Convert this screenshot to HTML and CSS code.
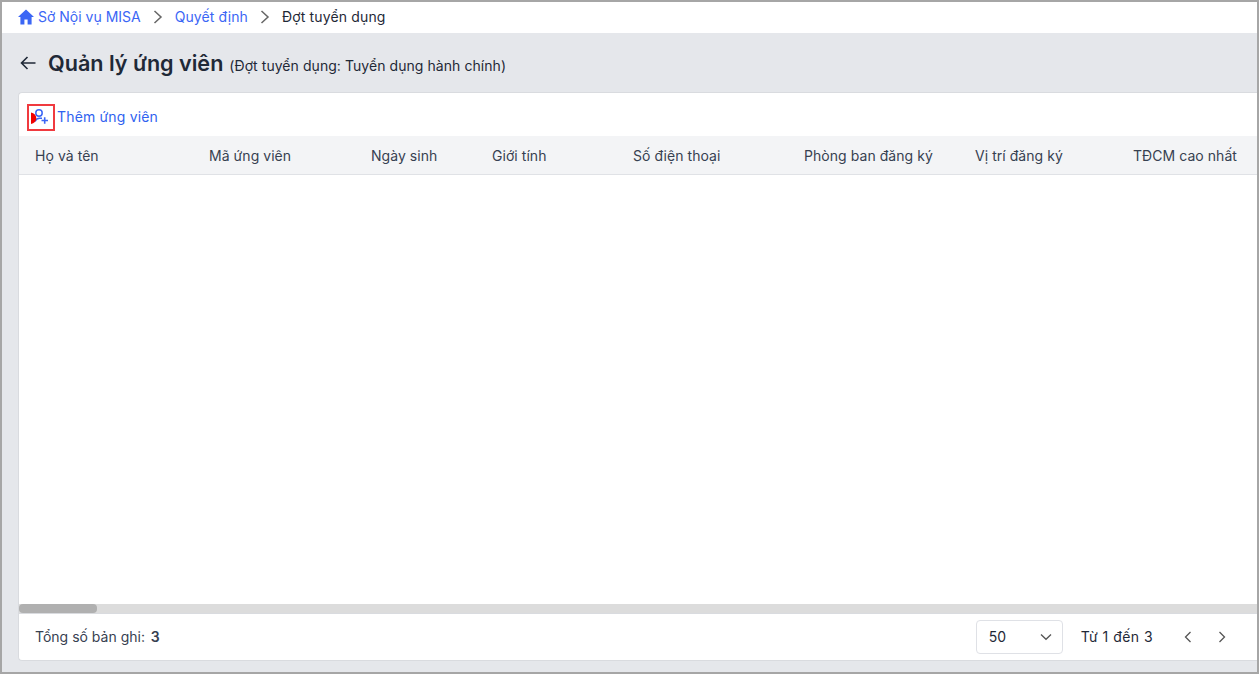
FILE: index.html
```html
<!DOCTYPE html>
<html lang="vi">
<head>
<meta charset="utf-8">
<title>Quản lý ứng viên</title>
<link rel="stylesheet" href="styles.css">
</head>
<body>
<div class="frame">
  <nav class="crumbs">
    <svg class="home" width="16" height="16" viewBox="0 0 16 16"><path d="M8 .5 0 8h2.400v7.500h4V10.600h3.200v4.900h4V8H16z" fill="#3b66f5"/></svg>
    <a class="crumb first">Sở Nội vụ MISA</a>
    <svg class="sep" width="10" height="14" viewBox="0 0 10 14"><path d="M1.500 1 8 7l-6.500 6" fill="none" stroke="#666" stroke-width="1.500"/></svg>
    <a class="crumb spaced">Quyết định</a>
    <svg class="sep" width="10" height="14" viewBox="0 0 10 14"><path d="M1.500 1 8 7l-6.500 6" fill="none" stroke="#666" stroke-width="1.500"/></svg>
    <span class="current">Đợt tuyển dụng</span>
  </nav>
  <main class="content">
    <header class="title-row">
      <svg class="back" width="16" height="14" viewBox="0 0 16 14"><path d="M15.500 7H1.500M7.500 1 1.500 7l6 6" fill="none" stroke="#1f2937" stroke-width="1.600"/></svg>
      <h1>Quản lý ứng viên</h1>
      <span class="subtitle">(Đợt tuyển dụng: Tuyển dụng hành chính)</span>
    </header>
    <section class="card">
      <div class="toolbar">
        <span class="icon-box">
          <svg width="20" height="20" viewBox="0 0 20 20">
            <circle cx="8" cy="5" r="3.200" fill="none" stroke="#3b66f5" stroke-width="1.500"/>
            <path d="M4 13.500c1-2.500 3-3.200 4.500-3.200h2.500" fill="none" stroke="#3b66f5" stroke-width="1.500"/>
            <path d="M10.500 12.500h6.500M13.700 9.300v6.400" stroke="#3b66f5" stroke-width="1.600"/>
            <path d="M0 4.500c3.200.7 5.300 3 5.300 5.700S3.200 15.300 0 16z" fill="#f00000"/>
          </svg>
        </span>
        <span class="add-label">Thêm ứng viên</span>
      </div>
      <div class="thead">
        <div class="th w1">Họ và tên</div>
        <div class="th w2">Mã ứng viên</div>
        <div class="th w3">Ngày sinh</div>
        <div class="th w4">Giới tính</div>
        <div class="th w5">Số điện thoại</div>
        <div class="th w5">Phòng ban đăng ký</div>
        <div class="th w6">Vị trí đăng ký</div>
        <div class="th w7">TĐCM cao nhất</div>
      </div>
      <div class="tbody"></div>
      <div class="scrollbar"><div class="thumb"></div></div>
      <footer class="foot">
        <div class="total">Tổng số bản ghi: <b>3</b></div>
        <div class="pager">
          <div class="select"><span>50</span>
            <svg width="12" height="8" viewBox="0 0 12 8"><path d="M1 1.500 6 6.300l5-4.800" fill="none" stroke="#555" stroke-width="1.300"/></svg>
          </div>
          <span class="range">Từ 1 đến 3</span>
          <svg class="nav-prev" width="8" height="12" viewBox="0 0 8 12"><path d="M6.500 1 1.500 6l5 5" fill="none" stroke="#555" stroke-width="1.300"/></svg>
          <svg class="nav-next" width="8" height="12" viewBox="0 0 8 12"><path d="M1.500 1l5 5-5 5" fill="none" stroke="#555" stroke-width="1.300"/></svg>
        </div>
      </footer>
    </section>
  </main>
</div>
</body>
</html>
```
FILE: styles.css
```css
* { box-sizing: border-box; }
html, body { margin: 0; height: 100%; overflow: hidden; }
body { font-family: Inter, "Liberation Sans", sans-serif; font-size: 14px; color: #1f2937; background: #fff; }
.frame { width: 1259px; height: 674px; border: 2px solid #a6a6a6; display: flex; flex-direction: column; overflow: hidden; }
.crumbs { height: 31px; flex: none; display: flex; align-items: center; padding: 0 0 2px 16px; background: #fff; }
.home { margin-right: 4px; }
.crumb { color: #3b66f5; }
.spaced { letter-spacing: .1px; }
.sep { margin: 0 12px 0 12px; }
.current { color: #1f2937; letter-spacing: .15px; }
.content { flex: 1; min-height: 0; background: #e5e7eb; padding: 0 0 11px 16px; display: flex; flex-direction: column; }
.title-row { height: 59px; flex: none; display: flex; align-items: center; }
.back { margin: 0 12px 0 2px; }
h1 { margin: 0; font-size: 21.600px; font-weight: 600; color: #1f2937; line-height: 28px; }
.subtitle { font-size: 14px; margin-left: 6px; padding-top: 5px; letter-spacing: .06px; }
.card { flex: 1; min-height: 0; background: #fff; border: 1px solid #d9dbdf; border-right: 0; border-radius: 4px 0 0 4px; display: flex; flex-direction: column; overflow: hidden; }
.toolbar { height: 43px; flex: none; display: flex; align-items: center; padding: 6px 0 0 8px; }
.icon-box { width: 28px; height: 27px; border: 2px solid #f03a3f; display: flex; align-items: center; justify-content: center; margin-right: 2px; }
.add-label { color: #2f62f0; letter-spacing: .17px; margin-top: -3px; }
.thead { height: 39px; flex: none; display: flex; align-items: center; padding-left: 16px; background: #f3f4f6; border-bottom: 1px solid #e0e2e6; white-space: nowrap; color: #374151; }
.th { flex: none; letter-spacing: .05px; }
.w1 { width: 174px; }
.w2 { width: 162px; }
.w3 { width: 121px; }
.w4 { width: 141px; }
.w5 { width: 171px; }
.w6 { width: 158px; }
.w7 { width: 140px; }
.tbody { flex: 1; min-height: 0; }
.scrollbar { height: 9px; flex: none; background: #dcdcdc; }
.thumb { width: 78px; height: 9px; background: #b0b0b0; border-radius: 4px; }
.foot { height: 47px; flex: none; display: flex; align-items: center; justify-content: space-between; padding: 0 31px 1px 16px; border-top: 1px solid #d9dbdf; }
.total { color: #374151; }
.total b { font-weight: 600; margin-left: 2px; }
.pager { display: flex; align-items: center; }
.select { width: 87px; height: 34px; border: 1px solid #dfe1e6; border-radius: 4px; display: flex; align-items: center; justify-content: space-between; padding: 0 10px 0 12px; }
.range { margin: 0 31px 0 18px; letter-spacing: .45px; }
.nav-next { margin-left: 26px; }
```
